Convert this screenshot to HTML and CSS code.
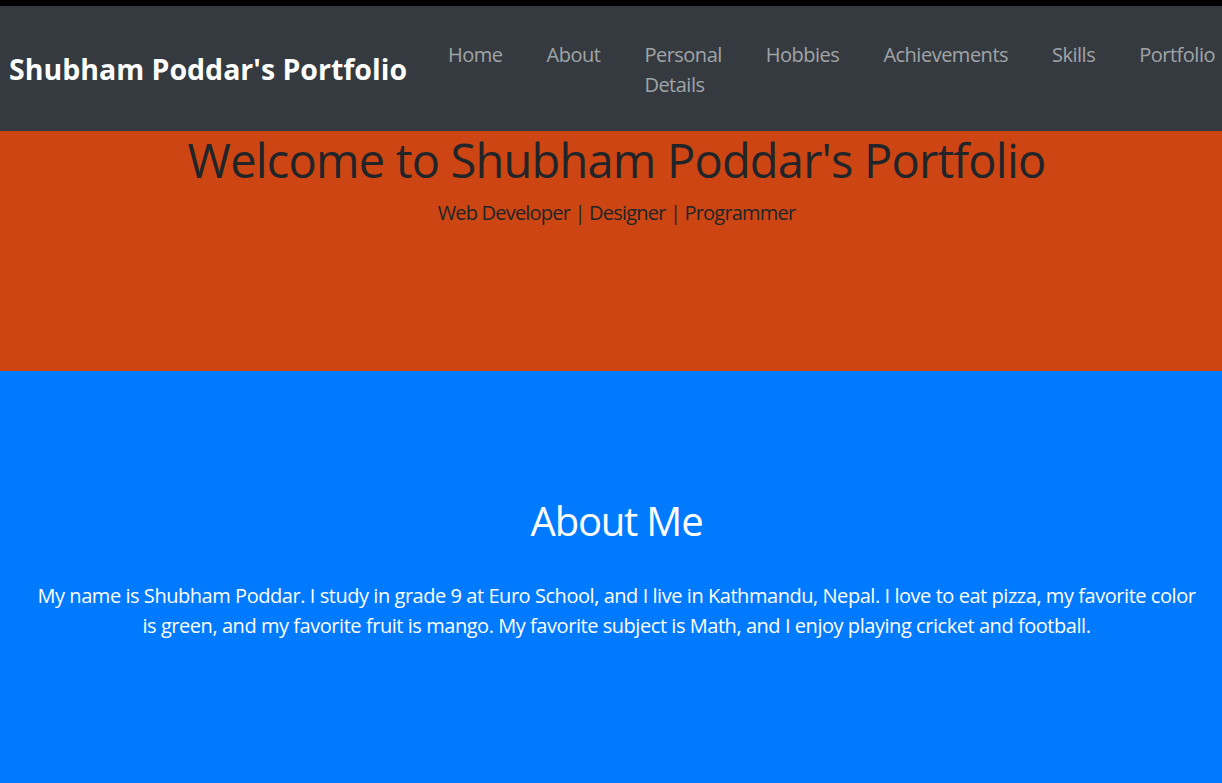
FILE: index.html
```html
<!DOCTYPE html>
<html lang="en">
<head>
<meta charset="utf-8">
<title>Shubham Poddar's Portfolio</title>
<link rel="stylesheet" href="styles.css">
</head>
<body>
<div class="page">
  <header class="navbar">
    <a class="brand" href="#">Shubham Poddar's Portfolio</a>
    <nav class="nav">
      <a class="nav-link" href="#home">Home</a>
      <a class="nav-link" href="#about">About</a>
      <a class="nav-link wrap" href="#personal">Personal Details</a>
      <a class="nav-link" href="#hobbies">Hobbies</a>
      <a class="nav-link" href="#achievements">Achievements</a>
      <a class="nav-link" href="#skills">Skills</a>
      <a class="nav-link" href="#portfolio">Portfolio</a>
    </nav>
  </header>
  <section class="hero" id="home">
    <h1 class="hero-title">Welcome to Shubham Poddar's Portfolio</h1>
    <p class="hero-lead">Web Developer | Designer | Programmer</p>
  </section>
  <section class="about" id="about">
    <h2 class="about-title">About Me</h2>
    <p class="about-text">My name is Shubham Poddar. I study in grade 9 at Euro School, and I live in Kathmandu, Nepal. I love to eat pizza, my favorite color is green, and my favorite fruit is mango. My favorite subject is Math, and I enjoy playing cricket and football.</p>
  </section>
</div>
</body>
</html>
```

FILE: styles.css
```css
html, body {
  margin: 0;
  padding: 0;
  overflow-x: hidden;
}
body {
  font-family: "Open Sans", "Noto Sans", sans-serif;
  color: #212529;
  background: #007bff;
}
.page {
  min-width: 1233px;
}
.navbar {
  display: flex;
  align-items: center;
  background: #343a40;
  border-top: 6px solid #000;
  height: 125px;
  padding-left: 9px;
  box-sizing: content-box;
}
.brand {
  color: #fff;
  font-weight: 700;
  font-size: 28.5px;
  text-decoration: none;
  white-space: nowrap;
  flex: none;
}
.nav {
  display: flex;
  align-items: flex-start;
  gap: 44px;
  margin-left: 41px;
  padding-top: 2px;
}
.nav-link {
  color: rgba(255,255,255,0.55);
  text-decoration: none;
  font-size: 20px;
  line-height: 30px;
  white-space: nowrap;
  letter-spacing: -0.5px;
}
.nav-link.wrap {
  white-space: normal;
  width: min-content;
}
.hero {
  background: #cc4512;
  height: 240px;
  text-align: center;
  padding-top: 1px;
  box-sizing: border-box;
}
.hero-title {
  margin: 0 0 10px;
  font-size: 47px;
  font-weight: 400;
  line-height: 56px;
  letter-spacing: -0.8px;
}
.hero-lead {
  margin: 0;
  font-size: 20px;
  line-height: 30px;
  letter-spacing: -0.8px;
}
.about {
  background: #007bff;
  color: #fff;
  text-align: center;
  padding: 126px 36px 140px;
}
.about-title {
  margin: 0 0 36px;
  font-size: 40px;
  font-weight: 400;
  line-height: 48px;
  letter-spacing: -1.2px;
}
.about-text {
  margin: 0;
  font-size: 20px;
  line-height: 30px;
  letter-spacing: -0.45px;
}
```
